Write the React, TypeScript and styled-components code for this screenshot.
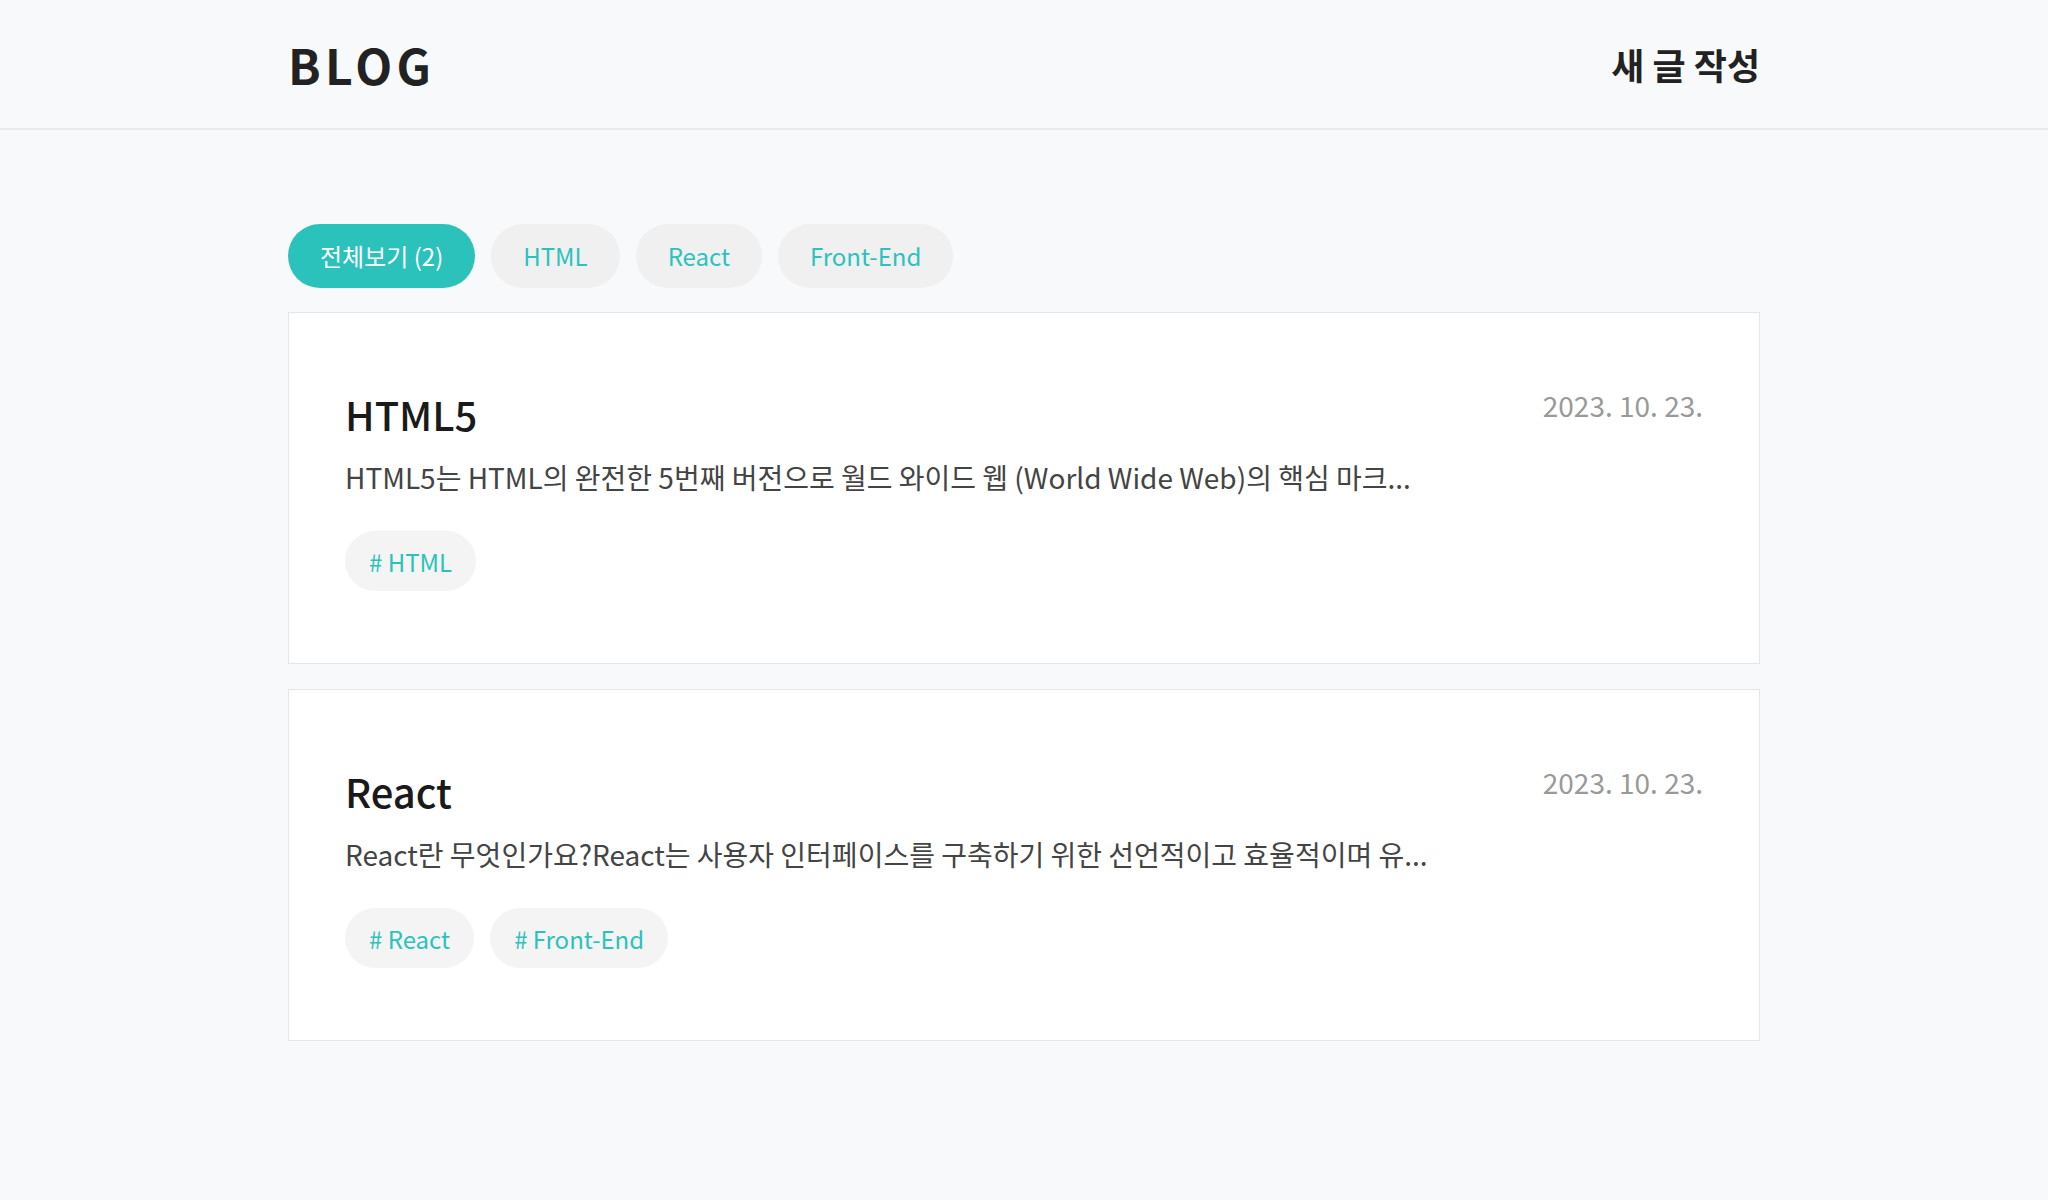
import React from "react";
import styled, { createGlobalStyle } from "styled-components";

const GlobalStyle = createGlobalStyle`
  * { box-sizing: border-box; }
  html, body {
    margin: 0;
    padding: 0;
    background: #f8f9fa;
    font-family: "Noto Sans CJK KR", "Noto Sans", sans-serif;
    color: #222;
  }
`;

const Header = styled.header`
  height: 130px;
  border-bottom: 2px solid #e9ecef;
  background: #f8f9fa;
`;

const Container = styled.div`
  width: 1472px;
  margin: 0 auto;
`;

const HeaderInner = styled(Container)`
  height: 128px;
  display: flex;
  align-items: center;
  justify-content: space-between;
`;

const Logo = styled.h1`
  margin: 0;
  font-size: 48px;
  font-weight: 700;
  letter-spacing: 0.09em;
  color: #222;
  line-height: 1;
`;

const WriteLink = styled.a`
  font-size: 36px;
  font-weight: 700;
  color: #222;
  text-decoration: none;
  cursor: pointer;
  line-height: 1;
`;

const Main = styled(Container)`
  padding-top: 94px;
  padding-bottom: 80px;
`;

const Tabs = styled.nav`
  display: flex;
  gap: 16px;
  margin-bottom: 24px;
`;

const Tab = styled.button<{ $active?: boolean }>`
  height: 64px;
  padding: 0 32px;
  border: none;
  border-radius: 32px;
  font-family: inherit;
  font-size: 24px;
  line-height: 1;
  background: ${(p) => (p.$active ? "#2cc2bc" : "#f0f0f0")};
  color: ${(p) => (p.$active ? "#ffffff" : "#2cc2bc")};
  cursor: pointer;
`;

const List = styled.div`
  display: flex;
  flex-direction: column;
  gap: 25px;
`;

const Card = styled.article`
  background: #ffffff;
  border: 1px solid #e3e6ea;
  padding: 72px 56px 72px;
`;

const CardHead = styled.div`
  display: flex;
  justify-content: space-between;
  align-items: flex-start;
`;

const Title = styled.h2`
  margin: 0;
  font-size: 40px;
  font-weight: 500;
  color: #1a1a1a;
  line-height: 58px;
`;

const DateText = styled.span`
  font-size: 28px;
  color: #999;
  line-height: 40px;
`;

const Desc = styled.p`
  margin: 14px 0 0;
  font-size: 28px;
  line-height: 40px;
  color: #444;
`;

const Tags = styled.div`
  display: flex;
  gap: 16px;
  margin-top: 34px;
`;

const Tag = styled.span`
  height: 60px;
  padding: 0 24px;
  border-radius: 30px;
  background: #f4f4f4;
  color: #2cc2bc;
  font-size: 24px;
  display: inline-flex;
  align-items: center;
`;

const posts = [
  {
    title: "HTML5",
    date: "2023. 10. 23.",
    desc: "HTML5는 HTML의 완전한 5번째 버전으로 월드 와이드 웹 (World Wide Web)의 핵심 마크...",
    tags: ["HTML"],
  },
  {
    title: "React",
    date: "2023. 10. 23.",
    desc: "React란 무엇인가요?React는 사용자 인터페이스를 구축하기 위한 선언적이고 효율적이며 유...",
    tags: ["React", "Front-End"],
  },
];

export default function App() {
  return (
    <>
      <GlobalStyle />
      <Header>
        <HeaderInner>
          <Logo>BLOG</Logo>
          <WriteLink>새 글 작성</WriteLink>
        </HeaderInner>
      </Header>
      <Main>
        <Tabs>
          <Tab $active>전체보기 (2)</Tab>
          <Tab>HTML</Tab>
          <Tab>React</Tab>
          <Tab>Front-End</Tab>
        </Tabs>
        <List>
          {posts.map((p) => (
            <Card key={p.title}>
              <CardHead>
                <Title>{p.title}</Title>
                <DateText>{p.date}</DateText>
              </CardHead>
              <Desc>{p.desc}</Desc>
              <Tags>
                {p.tags.map((t) => (
                  <Tag key={t}># {t}</Tag>
                ))}
              </Tags>
            </Card>
          ))}
        </List>
      </Main>
    </>
  );
}
